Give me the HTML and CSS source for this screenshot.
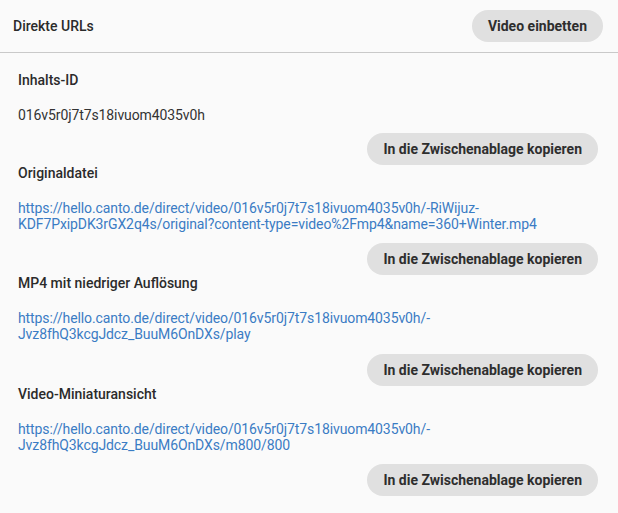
FILE: index.html
```html
<!DOCTYPE html>
<html lang="de">
<head>
<meta charset="utf-8">
<title>Direkte URLs</title>
<link rel="stylesheet" href="styles.css">
</head>
<body>
<div class="panel">
  <header class="panel-header">
    <h2 class="title">Direkte URLs</h2>
    <button class="pill" type="button">Video einbetten</button>
  </header>
  <div class="panel-body">
    <section class="field field-id">
      <div class="label">Inhalts-ID</div>
      <div class="value">016v5r0j7t7s18ivuom4035v0h</div>
      <div class="actions"><button class="pill" type="button">In die Zwischenablage kopieren</button></div>
    </section>
    <section class="field">
      <div class="label">Originaldatei</div>
      <div class="value"><a class="link" href="#">https://hello.canto.de/direct/video/016v5r0j7t7s18ivuom4035v0h/-RiWijuz-KDF7PxipDK3rGX2q4s/original?content-type=video%2Fmp4&amp;name=360+Winter.mp4</a></div>
      <div class="actions"><button class="pill" type="button">In die Zwischenablage kopieren</button></div>
    </section>
    <section class="field">
      <div class="label">MP4 mit niedriger Auflösung</div>
      <div class="value"><a class="link" href="#">https://hello.canto.de/direct/video/016v5r0j7t7s18ivuom4035v0h/-Jvz8fhQ3kcgJdcz_BuuM6OnDXs/play</a></div>
      <div class="actions"><button class="pill" type="button">In die Zwischenablage kopieren</button></div>
    </section>
    <section class="field">
      <div class="label">Video-Miniaturansicht</div>
      <div class="value"><a class="link" href="#">https://hello.canto.de/direct/video/016v5r0j7t7s18ivuom4035v0h/-Jvz8fhQ3kcgJdcz_BuuM6OnDXs/m800/800</a></div>
      <div class="actions"><button class="pill" type="button">In die Zwischenablage kopieren</button></div>
    </section>
  </div>
</div>
</body>
</html>
```

FILE: styles.css
```css
html, body {
  margin: 0;
  padding: 0;
  background: #fafafa;
}

body {
  font-family: Roboto, "Liberation Sans", Arial, sans-serif;
  font-size: 14px;
  color: #333333;
}

.panel-header {
  display: flex;
  align-items: center;
  justify-content: space-between;
  padding: 10px 15px 10px 13px;
  border-bottom: 1px solid #c9c9c9;
}

.title {
  margin: 0;
  font-size: 14px;
  font-weight: 500;
  line-height: 16px;
  color: #2b2b2b;
}

.pill {
  height: 32px;
  padding: 0 16px;
  border: none;
  border-radius: 16px;
  background: #e0e0e0;
  color: #2e2e2e;
  font-family: Roboto, "Liberation Sans", Arial, sans-serif;
  font-size: 14px;
  font-weight: 700;
  line-height: 16px;
  cursor: pointer;
}

.panel-body {
  padding: 19px 20px 0 18px;
}

.label {
  font-weight: 500;
  line-height: 16px;
  color: #2b2b2b;
}

.value {
  margin-top: 19px;
  line-height: 16px;
  letter-spacing: -0.1px;
  color: #333333;
}

.link {
  color: #3a7cc4;
  text-decoration: none;
}

.actions {
  display: flex;
  justify-content: flex-end;
  margin-top: 11.5px;
}

.field-id .actions {
  margin-top: 9.5px;
}
```
